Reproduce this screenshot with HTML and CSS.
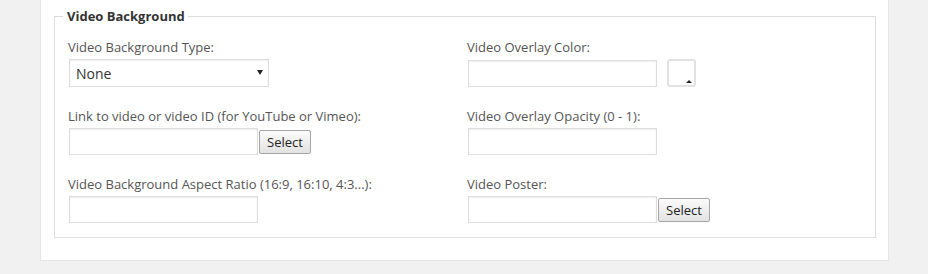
FILE: index.html
```html
<!DOCTYPE html>
<html lang="en">

<head>
    <meta charset="UTF-8">
    <meta name="viewport" content="width=device-width, initial-scale=1.0">
    <title>Video Background</title>
    <link rel="stylesheet" href="styles.css">
</head>

<body>
    <div class="postbox">
        <fieldset class="options-group">
            <legend>Video Background</legend>

            <div class="field-grid">
                <!-- Left column -->
                <div class="field-col">
                    <div class="field">
                        <label for="vbg-type">Video Background Type:</label>
                        <span class="select-wrap">
                            <select id="vbg-type">
                                <option>None</option>
                                <option>YouTube</option>
                                <option>Vimeo</option>
                                <option>Self hosted</option>
                            </select>
                        </span>
                    </div>

                    <div class="field">
                        <label for="vbg-link">Link to video or video ID (for YouTube or Vimeo):</label>
                        <div class="input-row">
                            <input type="text" id="vbg-link">
                            <button type="button">Select</button>
                        </div>
                    </div>

                    <div class="field">
                        <label for="vbg-ratio">Video Background Aspect Ratio (16:9, 16:10, 4:3...):</label>
                        <input type="text" id="vbg-ratio">
                    </div>
                </div>

                <!-- Right column -->
                <div class="field-col">
                    <div class="field">
                        <label for="vbg-color">Video Overlay Color:</label>
                        <div class="input-row">
                            <input type="text" id="vbg-color">
                            <span class="color-swatch"></span>
                        </div>
                    </div>

                    <div class="field">
                        <label for="vbg-opacity">Video Overlay Opacity (0 - 1):</label>
                        <input type="text" id="vbg-opacity">
                    </div>

                    <div class="field">
                        <label for="vbg-poster">Video Poster:</label>
                        <div class="input-row">
                            <input type="text" id="vbg-poster">
                            <button type="button">Select</button>
                        </div>
                    </div>
                </div>
            </div>
        </fieldset>
    </div>
</body>

</html>
```

FILE: styles.css
```css
body {
    margin: 0;
    background-color: #f1f1f1;
    font-family: 'Open Sans', sans-serif;
    font-size: 13px;
    color: #444;
}

.postbox {
    width: 822px;
    margin: -10px 0 0 40px;
    padding: 16px 12px 22px 13px;
    background-color: #ffffff;
    border: 1px solid #e5e5e5;
    box-shadow: 0 1px 1px rgba(0, 0, 0, 0.04);
}

.options-group {
    margin: 0;
    padding: 13px 13px 14px 13px;
    border: 1px solid #dddddd;
}

.options-group legend {
    margin-left: -5px;
    padding: 0 3px 0 4px;
    font-weight: 700;
    line-height: 18px;
    color: #333;
}

.field-grid {
    display: grid;
    grid-template-columns: 399px 1fr;
}

.field {
    margin-bottom: 20px;
}

.field:last-child {
    margin-bottom: 0;
}

.field label {
    display: block;
    margin-bottom: 3px;
    line-height: 18px;
    color: #555;
}

.input-row {
    display: flex;
    align-items: center;
    gap: 1px;
}

input[type="text"] {
    box-sizing: border-box;
    width: 189px;
    height: 27px;
    margin: 0 0 0 1px;
    padding: 3px 6px;
    border: 1px solid #dddddd;
    background-color: #fff;
    box-shadow: inset 0 1px 2px rgba(0, 0, 0, 0.07);
    font-family: 'Open Sans', sans-serif;
    font-size: 14px;
    color: #333;
}

.select-wrap {
    position: relative;
    display: inline-block;
    margin-left: 1px;
}

.select-wrap select {
    box-sizing: border-box;
    width: 200px;
    height: 28px;
    padding: 0 20px 0 6px;
    border: 1px solid #dddddd;
    border-radius: 0;
    background-color: #fff;
    box-shadow: inset 0 1px 2px rgba(0, 0, 0, 0.07);
    appearance: none;
    -webkit-appearance: none;
    font-family: 'Open Sans', sans-serif;
    font-size: 14px;
    color: #333;
}

.select-wrap::after {
    content: '';
    position: absolute;
    top: 11px;
    right: 6px;
    border-left: 3.5px solid transparent;
    border-right: 3.5px solid transparent;
    border-top: 5px solid #222;
    pointer-events: none;
}

button {
    box-sizing: border-box;
    height: 24px;
    padding: 0 7px;
    border: 1px solid #a5a5a5;
    border-radius: 2px;
    background: linear-gradient(to bottom, #fbfbfb, #e2e2e2);
    font-family: 'Open Sans', sans-serif;
    font-size: 13px;
    color: #222;
    cursor: pointer;
}

.color-swatch {
    position: relative;
    box-sizing: border-box;
    width: 29px;
    height: 28px;
    margin-left: 9px;
    border: 2px solid #e2e2e2;
    border-radius: 3px;
    background-color: #fff;
}

.color-swatch::after {
    content: '';
    position: absolute;
    right: 2px;
    bottom: 2px;
    border-left: 3px solid transparent;
    border-right: 3px solid transparent;
    border-bottom: 3px solid #222;
}
```
